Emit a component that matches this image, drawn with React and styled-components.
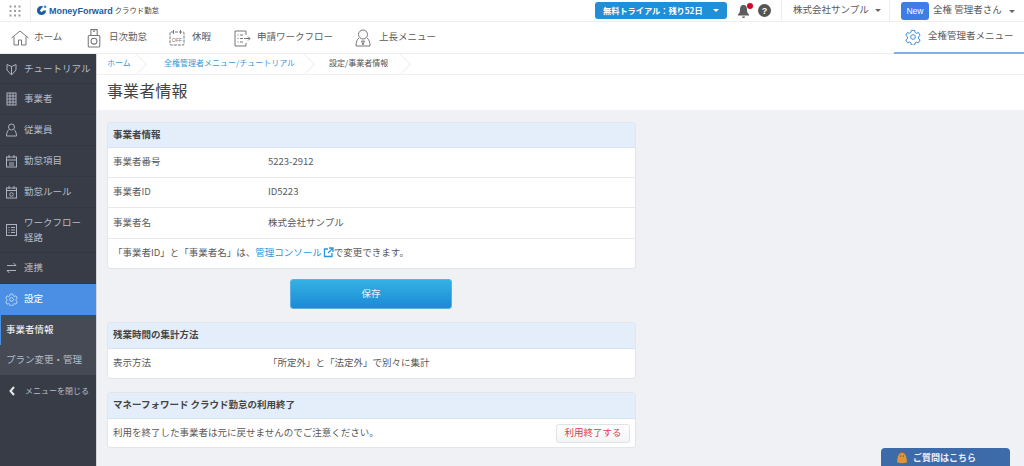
import React from "react";
import styled, { createGlobalStyle } from "styled-components";

const Global = createGlobalStyle`
  html, body { margin: 0; padding: 0; height: 100%; overflow: hidden; }
  body { font-family: "Noto Sans CJK JP", "Noto Sans", "Liberation Sans", sans-serif; color: #5a5a5a; background: #eff1f5; }
  * { box-sizing: border-box; }
`;

const Page = styled.div`
  position: relative; width: 1024px; height: 466px; overflow: hidden;
  display: flex; flex-direction: column;
`;

const TopBar = styled.header`
  height: 22px; flex: none; background: #fff; display: flex; align-items: center;
  border-bottom: 1px solid #eee;
`;
const GridIcon = styled.div`
  width: 31px; height: 21px; display: flex; align-items: center; justify-content: center; border-right: 1px solid #eee; margin-right: 5px;
  flex: none;
`;
const Logo = styled.div`display: flex; align-items: center; gap: 2px; color: #1b5da6; font: 700 9px "Liberation Sans", sans-serif; word-spacing: -2.2px; letter-spacing: -0.05px;`;
const LogoSub = styled.span`color: #444; font: 400 7.4px "Noto Sans CJK JP", sans-serif; margin-left: 0; padding-bottom: 2px; letter-spacing: 0;`;
const Spacer = styled.div`flex: 1;`;
const Trial = styled.div`
  width: 132px; height: 17px; background: #1f8fd8; border-radius: 3px; color: #fff; font-size: 8.2px; font-weight: 700;
  display: flex; align-items: center; padding: 0 0 2px 8px; gap: 10px; flex: none;
`;
const Caret = styled.span`
  width: 0; height: 0; border-left: 3px solid transparent; border-right: 3px solid transparent;
  border-top: 3.5px solid ${p => p.$c || "#666"}; display: inline-block; flex: none; margin-top: 2px;
`;
const BellBox = styled.div`position: relative; margin-left: 10px; width: 14px; height: 16px; flex: none; display: flex;`;
const RedDot = styled.span`position: absolute; right: -2px; top: 0; width: 6px; height: 6px; background: #d8002a; border-radius: 50%;`;
const Help = styled.div`
  margin-left: 7px; width: 13px; height: 13px; border-radius: 50%; background: #555; color: #fff; font: 700 9px "Liberation Sans", sans-serif;
  display: flex; align-items: center; justify-content: center; flex: none;
`;
const Company = styled.div`
  margin-left: 10px; width: 109px; height: 21px; border-left: 1px solid #eee; border-right: 1px solid #eee; display: flex; align-items: center;
  padding: 0 0 3px 11px; gap: 6px; font-size: 9.5px; flex: none; white-space: nowrap;
`;
const UserBox = styled.div`display: flex; align-items: center; padding: 0 0 0 11px; width: 134px; font-size: 9.5px; flex: none; white-space: nowrap;`;
const UserName = styled.span`padding-bottom: 3px;`;
const NewTag = styled.span`
  width: 28px; height: 18px; background: #3c7de6; color: #fff; border-radius: 3px; font: 400 8.5px "Liberation Sans", sans-serif;
  display: flex; align-items: center; justify-content: center; margin-right: 4px; flex: none;
`;

const NavBar = styled.nav`
  height: 32px; flex: none; background: #fff; display: flex; align-items: center; border-bottom: 1px solid #eee; padding-left: 10px;
`;
const NavItem = styled.div`
  display: flex; align-items: center; font-size: 9.5px; height: 100%; flex: none; width: ${p => p.$w}px; white-space: nowrap;
  svg { flex: none; margin-right: ${p => p.$gap}px; }
`;
const NavLabel = styled.span`padding-bottom: 3px;`;
const AdminTab = styled.div`
  margin-left: auto; width: 130px; height: 32px; border-bottom: 2px solid #7fb0ea; display: flex; align-items: center; padding-left: 11px; font-size: 9.5px; flex: none;
  svg { margin-right: 7px; flex: none; }
`;

const Body = styled.div`flex: 1; display: flex; min-height: 0;`;
const Side = styled.aside`width: 97px; flex: none; background: #383c47; border-right: 1px solid #d4d5d8; display: flex; flex-direction: column;`;
const SideItem = styled.div`
  height: ${p => p.$h || 31}px; flex: none; display: flex; align-items: center; padding-left: 6px; gap: 7px; white-space: nowrap;
  font-size: 9.5px; line-height: 15px; color: ${p => p.$active ? "#fff" : "#b5bccb"}; background: ${p => p.$active ? "#4a8fe3" : "transparent"};
  border-bottom: 1px solid ${p => p.$active ? "transparent" : "#343842"};
  svg { flex: none; }
`;
const SideLabel = styled.span`padding-bottom: 1px;`;
const SubItem = styled.div`
  height: 30px; flex: none; background: #454a55; display: flex; align-items: center; padding: 0 0 3px 5px; font-size: 9.5px;
  color: ${p => p.$on ? "#fff" : "#b9bdc6"}; white-space: nowrap;
  border-left: 1px solid ${p => p.$on ? "#4a8fe3" : "#454a55"};
`;
const CloseItem = styled.div`
  height: 31px; display: flex; align-items: center; padding-left: 9px; gap: 10px; font-size: 8px; color: #b5bccb; white-space: nowrap;
`;

const Main = styled.main`flex: 1; min-width: 0; display: flex; flex-direction: column;`;
const Crumbs = styled.div`
  height: 21px; flex: none; background: #fff; border-bottom: 1px solid #f1f1f1; display: flex; align-items: center; padding-left: 10px; font-size: 8px;
`;
const Crumb = styled.span`
  color: ${p => p.$cur ? "#555" : "#3d97d8"}; width: ${p => p.$w}px; flex: none; height: 100%; display: flex; align-items: center; position: relative; padding-bottom: 3px; white-space: nowrap;
  &::after {
    content: ""; position: absolute; right: ${p => p.$r}px; top: 3px; width: 14px; height: 14px; border-top: 1px solid #f0f0f0; border-right: 1px solid #f0f0f0; transform: rotate(45deg);
  }
`;
const TitleBar = styled.div`height: 35px; flex: none; background: #fff; padding: 0 0 5px 10px; display: flex; align-items: center;`;
const Title = styled.h1`margin: 0; font-size: 16px; font-weight: 400; color: #444; letter-spacing: 0.1px;`;
const Content = styled.div`flex: 1; background: #eff1f5; padding: 12px 0 0 10px; display: flex; flex-direction: column; align-items: flex-start;`;

const Card = styled.section`
  width: 529px; background: #fff; border: 1px solid #e2e5ea; border-radius: 3px; overflow: hidden; flex: none;
  margin-bottom: ${p => p.$mb || 0}px;
`;
const CardHead = styled.div`
  height: ${p => p.$h || 25}px; background: #e4eefb; border-bottom: 1px solid #d9e3ef; display: flex; align-items: center; padding: 0 0 3px 5px; font-size: 9.5px; font-weight: 700; color: #444;
`;
const Row = styled.div`
  height: ${p => p.$h || 30}px; display: flex; align-items: center; padding: 0 0 3px 5px; font-size: 9.5px;
  border-bottom: 1px solid #e9e9e9; &:last-child { border-bottom: none; }
`;
const RowLabel = styled.div`width: 155px; flex: none;`;
const Note = styled.div`
  height: 29px; display: flex; align-items: center; padding: 0 0 3px 5px; font-size: 9.5px;
`;
const LinkText = styled.span`color: #2b95d9; display: inline-flex; align-items: center; gap: 1px;`;
const SaveBtn = styled.button`
  width: 162px; height: 30px; margin: 10px 0 13px 183px; border: 1px solid #5fb0e0; border-radius: 3px; color: #e6f3fb; font: 400 9.5px "Noto Sans CJK JP", sans-serif;
  background: linear-gradient(#33b2e4, #1c8ad6); flex: none; padding: 0 0 3px;
`;
const EndBtn = styled.button`
  margin: 3px 5px 0 auto; width: 74px; height: 19px; background: linear-gradient(#fff, #f3f4f6); border: 1px solid #e0e2e5; border-radius: 3px;
  color: #df3b4c; font: 400 9.5px "Noto Sans CJK JP", sans-serif; padding: 0 0 2px;
`;
const Chat = styled.div`
  position: absolute; left: 881px; top: 448px; width: 129px; height: 18px; background: #3d6aa8; border-radius: 4px 4px 0 0; color: #eef; font-size: 9px; font-weight: 700;
  display: flex; align-items: center; padding-left: 15px; gap: 5px;
`;
const ChatLabel = styled.span`padding-bottom: 0;`;

const S = { fill: "none", stroke: "currentColor", strokeWidth: 1 };
const NI = ({ children, s = 20 }) => <svg width={s} height={s} viewBox="0 0 20 20" {...S} style={{ color: "#777" }}>{children}</svg>;
const SI = ({ children, c = "#aab1c0" }) => <svg width={11} height={14} viewBox="0 0 11 14" {...S} style={{ color: c }}>{children}</svg>;

const gear = "M9.500 2h5l.6 3.200 2 1.200 3.100-1.100 2.500 4.300-2.500 2.100v2.600l2.500 2.100-2.500 4.300-3.100-1.100-2 1.200-.6 3.200h-5l-.6-3.200-2-1.200-3.100 1.100L1.200 16.400l2.500-2.100v-2.600L1.200 9.600l2.500-4.300 3.100 1.100 2-1.200z";

export default function App() {
  return (
    <Page>
      <Global />
      <TopBar>
        <GridIcon>
          <svg width="12" height="12" viewBox="0 0 12 12" fill="#9a9ea5">
            {[1.5, 6, 10.5].flatMap(y => [1.5, 6, 10.5].map(x => <rect key={x + "-" + y} x={x - 1} y={y - 1} width="2" height="2" />))}
          </svg>
        </GridIcon>
        <Logo>
          <svg width="11" height="11" viewBox="0 0 12 12"><path d="M6 1a5 5 0 1 0 5 5H8.200L6 8 4.200 6 6 3.600 8 1.600A5 5 0 0 0 6 1z" fill="#1b5da6" /><circle cx="10" cy="2" r="1.400" fill="#1b9ad6" /></svg>
          Money Forward<LogoSub>クラウド勤怠</LogoSub>
        </Logo>
        <Spacer />
        <Trial>無料トライアル：残り52日<Caret $c="#fff" /></Trial>
        <BellBox>
          <svg width="13" height="16" viewBox="0 0 13 16" fill="#5c5c5c"><path d="M6.500 2C3.800 2 3 4 3 6.500c0 2.500-.6 3.700-2 5v1h11v-1c-1.400-1.300-2-2.500-2-5C10 4 9.200 2 6.500 2z" /><path d="M5 13.500h3a1.500 1.500 0 0 1-3 0z" /></svg>
          <RedDot />
        </BellBox>
        <Help>?</Help>
        <Company>株式会社サンプル<Caret /></Company>
        <UserBox><NewTag>New</NewTag><UserName>全権 管理者さん</UserName><Caret style={{ marginLeft: 7 }} /></UserBox>
      </TopBar>
      <NavBar>
        <NavItem $w={73} $gap={4}>
          <NI><path d="M1.500 10 10 3l8.500 7M4 8.500V17h4.500v-5h3v5H16V8.500" /></NI><NavLabel>ホーム</NavLabel>
        </NavItem>
        <NavItem $w={84} $gap={5}>
          <NI s={21}><rect x="5" y="8" width="11" height="11" rx="1" /><circle cx="10.500" cy="13.500" r="2.800" /><path d="M7.500 8V2.500h6V8M9.500 4h2" /></NI><NavLabel>日次勤怠</NavLabel>
        </NavItem>
        <NavItem $w={64} $gap={5}>
          <NI><rect x="3" y="4" width="14" height="13" rx="1" strokeDasharray="3 1" /><path d="M6.500 2v4M13.500 2v4" /><text x="10" y="14" textAnchor="middle" fontSize="5" fill="#777" stroke="none" fontFamily="Liberation Sans">OFF</text></NI><NavLabel>休暇</NavLabel>
        </NavItem>
        <NavItem $w={122} $gap={6}>
          <NI><path d="M15 7V3H4v15h11v-3" /><path d="M6.500 7h1M6.500 10.500h1M6.500 14h1M9 7h3M9 10.500h3M9 14h3M13 10.500h6M17 8.500l2 2-2 2" /></NI><NavLabel>申請ワークフロー</NavLabel>
        </NavItem>
        <NavItem $w={100} $gap={6}>
          <NI><circle cx="10" cy="6.500" r="4.500" /><path d="M6 10c-2 1.500-3 4-3 8h14c0-4-1-6.500-3-8" /><path d="M8.500 13h3l-1.500 4z" /></NI><NavLabel>上長メニュー</NavLabel>
        </NavItem>
        <AdminTab>
          <svg width="16" height="16" viewBox="0 0 24 24" fill="none" stroke="#3d8fd8" strokeWidth="1.500"><circle cx="12" cy="12" r="3.500" /><path d={gear} /></svg>
          <NavLabel>全権管理者メニュー</NavLabel>
        </AdminTab>
      </NavBar>
      <Body>
        <Side>
          <SideItem $h={30}>
            <SI><path d="M1 2.500l4.500 2 4.500-2V8l-4.500 5L1 8zM5.500 4.500V13" /></SI><SideLabel>チュートリアル</SideLabel>
          </SideItem>
          <SideItem>
            <SI><rect x="1" y="1" width="9" height="12" /><path d="M1 4h9M1 7h9M1 10h9M4 1v12M7 1v12" /></SI><SideLabel>事業者</SideLabel>
          </SideItem>
          <SideItem>
            <SI><circle cx="5.500" cy="4" r="3" /><path d="M3 6.500C1.500 8 .5 10 .5 13h10c0-3-1-5-2.500-6.500" /></SI><SideLabel>従業員</SideLabel>
          </SideItem>
          <SideItem>
            <SI><rect x=".5" y="3" width="10" height="10" /><path d="M3 1v3M8 1v3M.5 6h10M3 9h5M3 11h5" /></SI><SideLabel>勤怠項目</SideLabel>
          </SideItem>
          <SideItem>
            <SI><rect x=".5" y="3" width="10" height="10" /><path d="M3 1v3M8 1v3M.5 5.500h10" /><circle cx="5.500" cy="9.500" r="1.800" /></SI><SideLabel>勤怠ルール</SideLabel>
          </SideItem>
          <SideItem $h={45}>
            <SI><rect x=".5" y="1.500" width="10" height="11" /><path d="M2.500 4.500h1M2.500 7h1M2.500 9.500h1M5 4.500h4M5 7h4M5 9.500h4" /></SI>
            <SideLabel>ワークフロー<br />経路</SideLabel>
          </SideItem>
          <SideItem>
            <SI><path d="M1 4.500h9M7.500 2l2.500 2.500M10 9.500H1M3.500 12L1 9.500" /></SI><SideLabel>連携</SideLabel>
          </SideItem>
          <SideItem $active $h={31}>
            <svg width="13" height="13" viewBox="0 0 24 24" fill="none" stroke="#cfe2f8" strokeWidth="1.500" style={{ marginLeft: -1, marginRight: -1 }}><circle cx="12" cy="12" r="3.500" /><path d={gear} /></svg>
            <SideLabel>設定</SideLabel>
          </SideItem>
          <SubItem $on>事業者情報</SubItem>
          <SubItem>プラン変更・管理</SubItem>
          <CloseItem>
            <svg width="6" height="10" viewBox="0 0 6 10" fill="none" stroke="#e8e8e8" strokeWidth="2"><path d="M5 1 1.500 5 5 9" /></svg>
            メニューを閉じる
          </CloseItem>
        </Side>
        <Main>
          <Crumbs>
            <Crumb $w={57} $r={20}>ホーム</Crumb>
            <Crumb $w={165} $r={17}>全権管理者メニュー/チュートリアル</Crumb>
            <Crumb $cur $w={92} $r={13}>設定/事業者情報</Crumb>
          </Crumbs>
          <TitleBar><Title>事業者情報</Title></TitleBar>
          <Content>
            <Card>
              <CardHead>事業者情報</CardHead>
              <Row><RowLabel>事業者番号</RowLabel>5223-2912</Row>
              <Row><RowLabel>事業者ID</RowLabel>ID5223</Row>
              <Row $h={31}><RowLabel>事業者名</RowLabel>株式会社サンプル</Row>
              <Note>
                「事業者ID」と「事業者名」は、
                <LinkText>管理コンソール
                  <svg width="11" height="11" viewBox="0 0 11 11" fill="none" stroke="#2b95d9" strokeWidth="1.300"><path d="M5 2H1.500v7.500H9V6M6 1h4v4M10 1 5 6" /></svg>
                </LinkText>で変更できます。
              </Note>
            </Card>
            <SaveBtn>保存</SaveBtn>
            <Card $mb={13}>
              <CardHead $h={26}>残業時間の集計方法</CardHead>
              <Row $h={29}><RowLabel>表示方法</RowLabel>「所定外」と「法定外」で別々に集計</Row>
            </Card>
            <Card>
              <CardHead $h={26}>マネーフォワード クラウド勤怠の利用終了</CardHead>
              <Row $h={28}>利用を終了した事業者は元に戻せませんのでご注意ください。<EndBtn>利用終了する</EndBtn></Row>
            </Card>
          </Content>
        </Main>
      </Body>
      <Chat>
        <svg width="12" height="14" viewBox="0 0 12 14"><path d="M6 2.500C3 2.500 1.500 6 1 12c0 1.500 10 1.500 10 0C10.500 6 9 2.500 6 2.500z" fill="#e0943a" /><path d="M4.500 3 6 1l1.500 2z" fill="#d8433a" /><circle cx="4.700" cy="6" r=".6" fill="#333" /><circle cx="7.300" cy="6" r=".6" fill="#333" /></svg>
        <ChatLabel>ご質問はこちら</ChatLabel>
      </Chat>
    </Page>
  );
}
